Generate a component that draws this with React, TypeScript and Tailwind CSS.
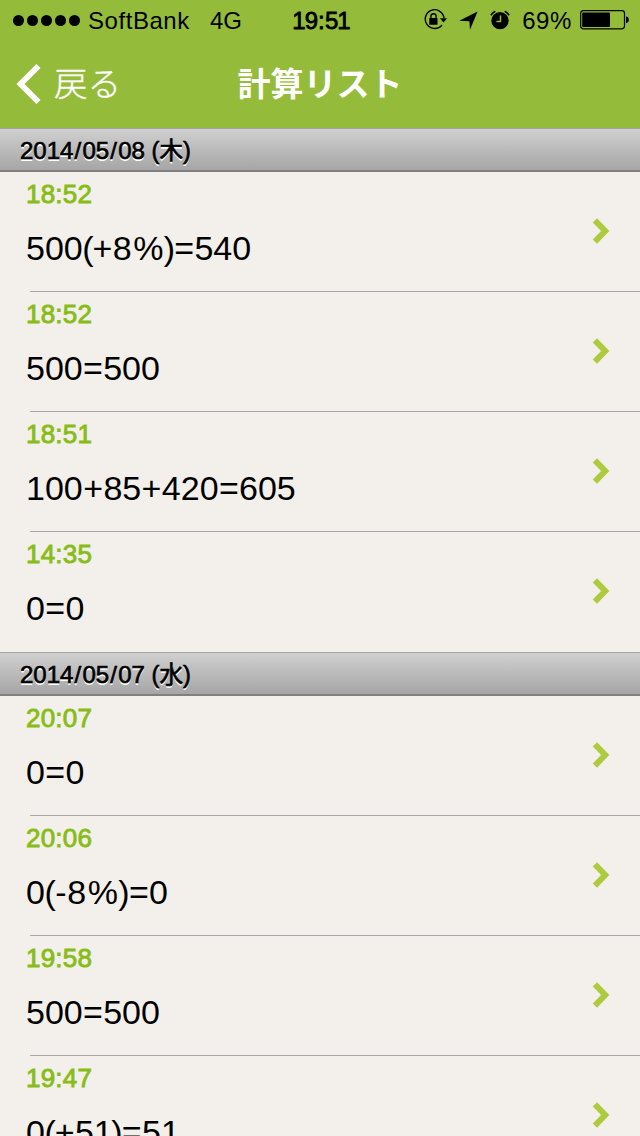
import { Fragment } from "react";

type Entry = { time: string; formula: string };
type Section = { date: string; weekday: string; entries: Entry[] };

const sections: Section[] = [
  {
    date: "2014/05/08",
    weekday: "木",
    entries: [
      { time: "18:52", formula: "500(+8%)=540" },
      { time: "18:52", formula: "500=500" },
      { time: "18:51", formula: "100+85+420=605" },
      { time: "14:35", formula: "0=0" },
    ],
  },
  {
    date: "2014/05/07",
    weekday: "水",
    entries: [
      { time: "20:07", formula: "0=0" },
      { time: "20:06", formula: "0(-8%)=0" },
      { time: "19:58", formula: "500=500" },
      { time: "19:47", formula: "0(+51)=51" },
    ],
  },
];

// Spacing of the symbols between digits, tuned per glyph.
const symbolSpacing: Record<string, string> = {
  "(": "-ml-[0.5px] -mr-[1.5px]",
  ")": "-ml-[1.5px] -mr-px",
  "%": "ml-[1.5px] mr-[1.8px]",
  "+": "mx-[0.4px]",
  "=": "mx-[0.3px]",
  "-": "mx-[0.9px]",
};

function StatusBar() {
  return (
    <div className="flex h-10 items-center pl-[13px] pr-[11px] text-[24px] leading-10 text-black">
      <div className="flex flex-1 items-center">
        <div className="flex gap-[3px]">
          {[0, 1, 2, 3, 4].map((i) => (
            <span key={i} className="size-[11px] rounded-full bg-black" />
          ))}
        </div>
        <span className="ml-2 w-[103px] pt-0.5 tracking-[0.55px] whitespace-nowrap">SoftBank</span>
        <span className="ml-[19px] pt-0.5">4G</span>
      </div>
      <span className="w-[58px] pt-0.5 text-center tracking-[-0.9px] whitespace-nowrap [-webkit-text-stroke:0.8px_black]">
        19<span className="mx-px">:</span>51
      </span>
      <div className="flex flex-1 items-center justify-end">
        <svg className="mr-3 h-[22px] w-6" viewBox="0 0 24 22">
          <path d="M21 9A9.4 9.4 0 1 0 19 16" fill="none" stroke="black" strokeWidth="1.4" />
          <path d="M17 9.3h7l-3.5 4.2z" fill="black" />
          <path d="M7.9 9V7.3a2.6 2.6 0 0 1 5.2 0V9" fill="none" stroke="black" strokeWidth="1.4" />
          <rect x="6.3" y="9" width="8.2" height="6.8" rx=".5" fill="black" />
        </svg>
        <svg className="mr-3 h-[19px] w-[19px]" viewBox="0 0 19 19">
          <path d="M18.6.6L11 18.8l-.6-8.5L.3 9.7z" fill="black" />
        </svg>
        <svg className="mr-3 h-5 w-5" viewBox="0 0 20 20">
          <circle cx="10" cy="10.6" r="8.7" fill="black" />
          <path d="M.9 5.2A12 12 0 0 1 5.3 1.3M14.7 1.3A12 12 0 0 1 19.1 5.2" fill="none" stroke="black" strokeWidth="1.6" />
          <path d="M10.5 5.5V11.4H6.4" fill="none" stroke="#94bc3a" strokeWidth="1.5" />
        </svg>
        <span className="mr-2 pt-0.5 tracking-[0.6px]">69%</span>
        <svg className="h-5 w-[49px]" viewBox="0 0 49 20">
          <rect x=".7" y=".7" width="43.8" height="18.1" rx="2.7" fill="none" stroke="black" strokeWidth="1.2" />
          <rect x="2.2" y="2.5" width="27.8" height="14.5" rx="1" fill="black" />
          <path d="M46 6.4c3.8 0 3.8 6.8 0 6.8z" fill="black" />
        </svg>
      </div>
    </div>
  );
}

function NavigationBar() {
  return (
    <div className="flex h-[88px] items-center px-4 text-white">
      <button className="flex flex-1 items-center">
        <svg className="h-[42px] w-[26px]" viewBox="0 0 26 42">
          <path d="M22.5 3L4.5 21l18 18" fill="none" stroke="white" strokeWidth="5.8" />
        </svg>
        <span className="ml-3 pt-0.5 text-[33.5px] leading-10 font-light [-webkit-text-stroke:0.4px_white]">戻る</span>
      </button>
      <h1 className="pt-0.5 text-[33px] leading-10 font-bold whitespace-nowrap">計算リスト</h1>
      <div className="flex-1" />
    </div>
  );
}

function SectionHeader({ date, weekday }: { date: string; weekday: string }) {
  return (
    <h2 className="flex h-11 items-center border-t border-b-2 border-t-[#a3a3a5] border-b-[#808080] bg-linear-to-b from-[#d0d0d0] to-[#a6a6a6] pl-5 text-[24px] leading-10">
      <span className="pt-0.5 whitespace-nowrap text-black [-webkit-text-stroke:0.7px_black] [text-shadow:0_2px_0_white]">
        {date.split("/").map((part, i) => (
          <Fragment key={i}>
            {i > 0 && <span className="px-[1.2px]">/</span>}
            {part}
          </Fragment>
        ))}
        {" "}
        <span className="text-[23.5px]">({weekday})</span>
      </span>
    </h2>
  );
}

function Formula({ text }: { text: string }) {
  return (
    <p className="pt-[17px] pb-[11px] text-[34px] leading-[48px] whitespace-nowrap text-black">
      {text.split(/([^0-9])/).map((part, i) =>
        symbolSpacing[part] ? (
          <span key={i} className={symbolSpacing[part]}>
            {part}
          </span>
        ) : (
          part
        ),
      )}
    </p>
  );
}

function Row({ time, formula }: Entry) {
  return (
    <li className="group flex h-[120px] flex-col">
      <div className="flex flex-1 items-start pr-[30px] pl-[26px]">
        <div className="flex-1 pt-1.5">
          <p className="h-[29px] text-[26px] leading-[32px] tracking-[0.2px] text-[#88bd18] [-webkit-text-stroke:0.9px_#88bd18]">
            {time}
          </p>
          <Formula text={formula} />
        </div>
        <svg className="mt-[46px] h-[26px] w-[18px]" viewBox="0 0 18 26">
          <path d="M2.9 2.4L13.2 13 2.9 23.6" fill="none" stroke="#aecb3f" strokeWidth="6" />
        </svg>
      </div>
      <div className="ml-[30px] h-px bg-[#a9a8a6] group-last:bg-transparent" />
    </li>
  );
}

export default function App() {
  return (
    <div className="h-[1136px] w-[640px] overflow-hidden bg-[#f3f0eb] font-['Liberation_Sans','Noto_Sans_CJK_JP',sans-serif]">
      <header className="bg-[#94bc3a]">
        <StatusBar />
        <NavigationBar />
      </header>
      <main>
        {sections.map((section) => (
          <section key={section.date}>
            <SectionHeader date={section.date} weekday={section.weekday} />
            <ul>
              {section.entries.map((entry, i) => (
                <Row key={i} {...entry} />
              ))}
            </ul>
          </section>
        ))}
      </main>
    </div>
  );
}
